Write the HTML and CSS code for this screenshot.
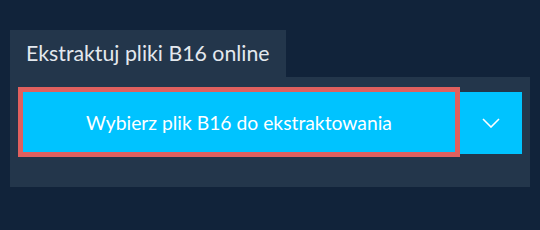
FILE: index.html
```html
<html>
<head>
  <link rel="stylesheet" href="styles.css">
</head>
<body>
  <div class="converter">
    <div class="tab">Ekstraktuj pliki B16 online</div>
    <div class="panel">
      <div class="picker">
        <button class="choose-file">Wybierz plik B16 do ekstraktowania</button>
        <button class="more-sources">
          <svg width="18" height="10" viewBox="0 0 18 10">
            <path d="M1 1 L9 9 L17 1" fill="none" stroke="#fff" stroke-width="1.6"/>
          </svg>
        </button>
      </div>
    </div>
  </div>
</body>
</html>
```

FILE: styles.css
```css
/* General styling */
body {
  margin: 0;
  background-color: #11233a;
  font-family: 'Lato', sans-serif;
}

.converter {
  padding: 30px 10px 0 10px;
}

/* Tab on top of the panel */
.tab {
  display: inline-block;
  width: 260px;
  height: 47px;
  padding-left: 16px;
  background-color: #23364b;
  color: #e3e8ee;
  font-size: 21.3px;
  line-height: 46px;
  box-sizing: content-box;
}

.panel {
  background-color: #23364b;
  height: 110px;
  padding: 10px 8px 0 8px;
  box-sizing: border-box;
}

.picker {
  display: flex;
  align-items: flex-start;
}

.choose-file {
  width: 442px;
  height: 70px;
  background-color: #00c3ff;
  border: 5px solid #e0605e;
  color: #fff;
  font-family: 'Lato', sans-serif;
  font-size: 19.3px;
  padding: 0;
  cursor: pointer;
}

.more-sources {
  width: 62px;
  height: 62px;
  margin-top: 5px;
  background-color: #00c3ff;
  border: none;
  padding: 0;
  display: flex;
  justify-content: center;
  align-items: center;
  cursor: pointer;
}
```
